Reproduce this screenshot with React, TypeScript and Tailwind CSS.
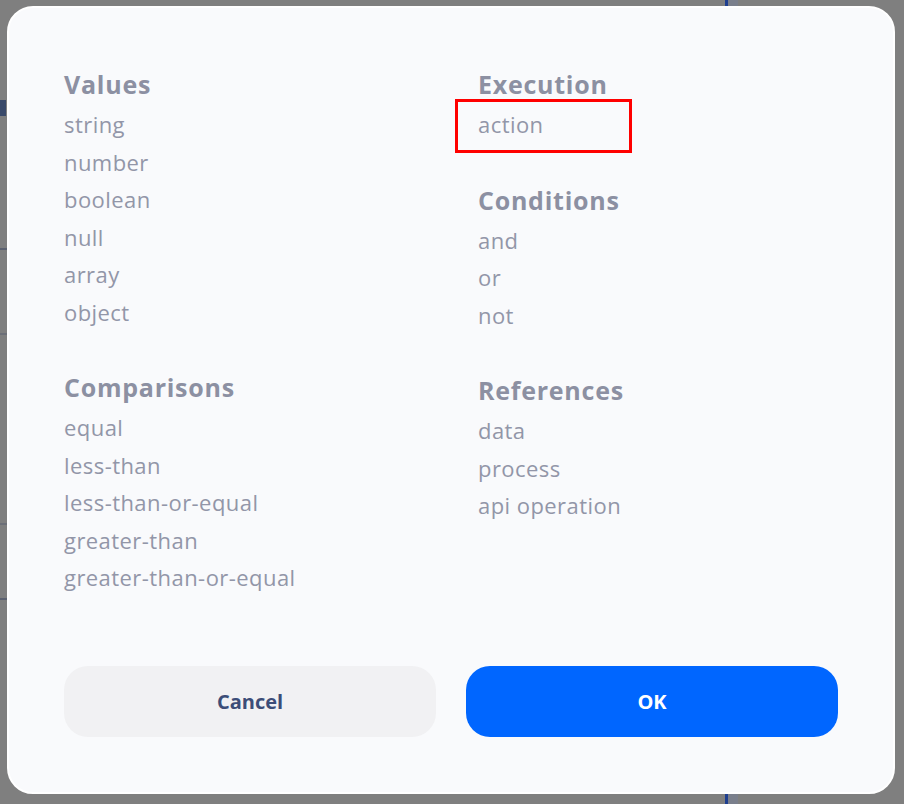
import React from "react";

type Section = { title: string; items: string[] };

const left: Section[] = [
  { title: "Values", items: ["string", "number", "boolean", "null", "array", "object"] },
  {
    title: "Comparisons",
    items: ["equal", "less-than", "less-than-or-equal", "greater-than", "greater-than-or-equal"],
  },
];

const right: Section[] = [
  { title: "Execution", items: ["action"] },
  { title: "Conditions", items: ["and", "or", "not"] },
  { title: "References", items: ["data", "process", "api operation"] },
];

const Group = ({ section }: { section: Section }) => (
  <div className="flex flex-col">
    <h3 className="text-[25px] font-bold leading-[44px] tracking-[0.03em] text-[#8c90a2]">
      {section.title}
    </h3>
    {section.items.map((item) => (
      <div key={item} className="relative text-[22px] leading-[37.5px] tracking-[0.02em] text-[#9296a8]">
        {item}
        {item === "action" && (
          <span className="pointer-events-none absolute left-[-23px] top-[-7px] h-[54px] w-[177px] border-[3px] border-[#ff0000]" />
        )}
      </div>
    ))}
  </div>
);

export default function App() {
  return (
    <div
      className="relative h-[804px] w-[904px] overflow-hidden bg-[#7f7f7f]"
      style={{ fontFamily: "'Open Sans', Lato, sans-serif" }}
    >
      {/* faint page behind the overlay */}
      <div className="absolute left-[725px] top-0 h-full w-[3px] bg-[#1e3f8f]" />
      <div className="absolute left-[728px] top-0 h-full w-[10px] bg-[#7a7f8c]" />
      <div className="absolute left-0 top-[100px] h-[16px] w-[6px] bg-[#3a4a6a]" />
      <div className="absolute left-0 top-[248px] h-[2px] w-[8px] bg-[#5c6170]" />
      <div className="absolute left-0 top-[333px] h-[2px] w-[8px] bg-[#6c6f78]" />
      <div className="absolute left-0 top-[523px] h-[2px] w-[8px] bg-[#6c6f78]" />
      <div className="absolute left-0 top-[598px] h-[2px] w-[8px] bg-[#5c6170]" />

      <div className="relative flex h-full pl-[7px] pt-[6px]">
        <div className="flex h-[788px] w-[888px] flex-col rounded-[26px] border-2 border-white bg-[#f9fafc] px-[55px] pb-[55px] pt-[54px]">
          <div className="grid grid-cols-[414px_1fr]">
            <div className="flex flex-col gap-[34px]">
              {left.map((s) => (
                <Group key={s.title} section={s} />
              ))}
            </div>
            <div className="flex flex-col gap-[34px]">
              {right.map((s) => (
                <Group key={s.title} section={s} />
              ))}
            </div>
          </div>

          <div className="mt-auto flex gap-[30px]">
            <button className="h-[71px] flex-1 rounded-[24px] bg-[#f1f1f3] text-[20px] font-bold text-[#3c4d78]">
              Cancel
            </button>
            <button className="h-[71px] flex-1 rounded-[24px] bg-[#0066ff] text-[20px] font-bold text-white">
              OK
            </button>
          </div>
        </div>
      </div>
    </div>
  );
}
